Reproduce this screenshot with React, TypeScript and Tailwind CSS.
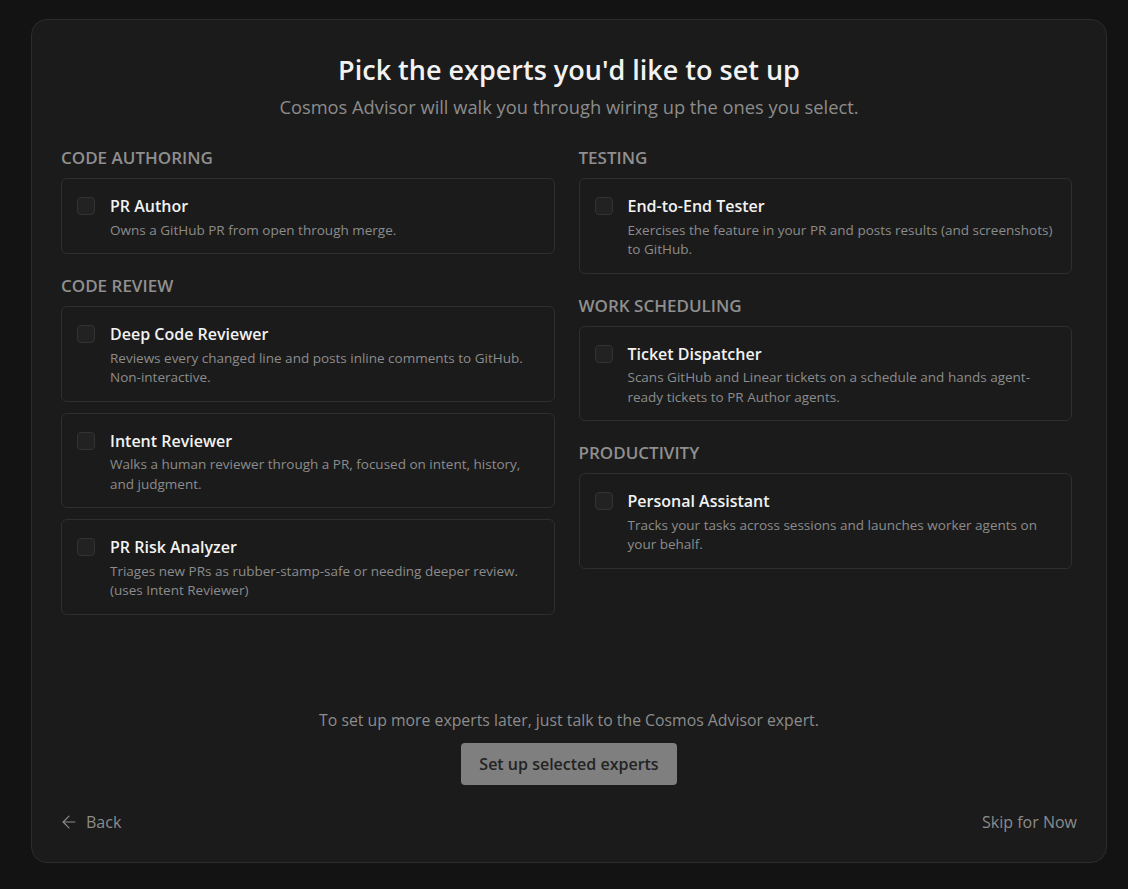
import React from 'react';
import { ArrowLeft } from 'lucide-react';

type Expert = { name: string; desc: string };
type Section = { title: string; experts: Expert[] };

const leftSections: Section[] = [
  {
    title: 'CODE AUTHORING',
    experts: [{ name: 'PR Author', desc: 'Owns a GitHub PR from open through merge.' }],
  },
  {
    title: 'CODE REVIEW',
    experts: [
      { name: 'Deep Code Reviewer', desc: 'Reviews every changed line and posts inline comments to GitHub. Non-interactive.' },
      { name: 'Intent Reviewer', desc: 'Walks a human reviewer through a PR, focused on intent, history, and judgment.' },
      { name: 'PR Risk Analyzer', desc: 'Triages new PRs as rubber-stamp-safe or needing deeper review. (uses Intent Reviewer)' },
    ],
  },
];

const rightSections: Section[] = [
  {
    title: 'TESTING',
    experts: [{ name: 'End-to-End Tester', desc: 'Exercises the feature in your PR and posts results (and screenshots) to GitHub.' }],
  },
  {
    title: 'WORK SCHEDULING',
    experts: [{ name: 'Ticket Dispatcher', desc: 'Scans GitHub and Linear tickets on a schedule and hands agent-ready tickets to PR Author agents.' }],
  },
  {
    title: 'PRODUCTIVITY',
    experts: [{ name: 'Personal Assistant', desc: 'Tracks your tasks across sessions and launches worker agents on your behalf.' }],
  },
];

const ExpertCard: React.FC<{ expert: Expert }> = ({ expert }) => (
  <label className="flex items-start gap-[15px] rounded-md border border-[#2f2f2f] bg-[#1b1b1b] px-[15px] pt-[14px] pb-[13px] cursor-pointer">
    <span className="mt-[4px] h-[18px] w-[18px] shrink-0 rounded-[4px] border border-[#333333] bg-[#222222]" />
    <div className="min-w-0">
      <div className="text-[16px] leading-[26px] font-semibold text-[#f2f2f2]">{expert.name}</div>
      <div className="mt-[1.5px] text-[13.5px] leading-[19.5px] text-[#8c8c8c]">{expert.desc}</div>
    </div>
  </label>
);

const Column: React.FC<{ sections: Section[] }> = ({ sections }) => (
  <div className="flex flex-col gap-[20px]">
    {sections.map((s) => (
      <div key={s.title}>
        <h3 className="mb-[8px] text-[17px] leading-[24px] font-semibold text-[#8f8f8f]">{s.title}</h3>
        <div className="flex flex-col gap-[11px]">
          {s.experts.map((e) => (
            <ExpertCard key={e.name} expert={e} />
          ))}
        </div>
      </div>
    ))}
  </div>
);

export default function App() {
  return (
    <div
      className="h-[889px] w-[1128px] bg-[#131313] pl-[31px] pt-[19px]"
      style={{ fontFamily: '"Open Sans", "Noto Sans", sans-serif' }}
    >
      <div className="flex h-[844px] w-[1076px] flex-col rounded-[16px] border border-[#2c2c2c] bg-[#1b1b1b] px-[29px]">
        {/* Header */}
        <div className="pt-[32px] text-center">
          <h1 className="text-[27px] leading-[36px] font-semibold text-[#f2f2f2]">Pick the experts you'd like to set up</h1>
          <p className="mt-[5px] text-[18.3px] leading-[27px] text-[#8c8c8c]">
            Cosmos Advisor will walk you through wiring up the ones you select.
          </p>
        </div>

        {/* Expert grid */}
        <div className="mt-[26px] grid grid-cols-2 gap-[24px] pr-[5px]">
          <Column sections={leftSections} />
          <Column sections={rightSections} />
        </div>

        {/* Footer */}
        <div className="mt-auto flex flex-col items-center">
          <p className="text-[15.8px] leading-[24px] text-[#8c8c8c]">
            To set up more experts later, just talk to the Cosmos Advisor expert.
          </p>
          <button className="mt-[11px] h-[42px] w-[216px] rounded-[4px] bg-[#7f7f7f] text-[16px] font-semibold text-[#232323]">
            Set up selected experts
          </button>
        </div>
        <div className="mt-[25px] mb-[28px] flex items-center justify-between">
          <button className="ml-[-2px] flex items-center gap-[7px] text-[16px] leading-[24px] text-[#8c8c8c]">
            <ArrowLeft className="h-[20px] w-[20px]" strokeWidth={1.4} />
            <span>Back</span>
          </button>
          <button className="text-[16px] leading-[24px] text-[#8c8c8c]">Skip for Now</button>
        </div>
      </div>
    </div>
  );
}
